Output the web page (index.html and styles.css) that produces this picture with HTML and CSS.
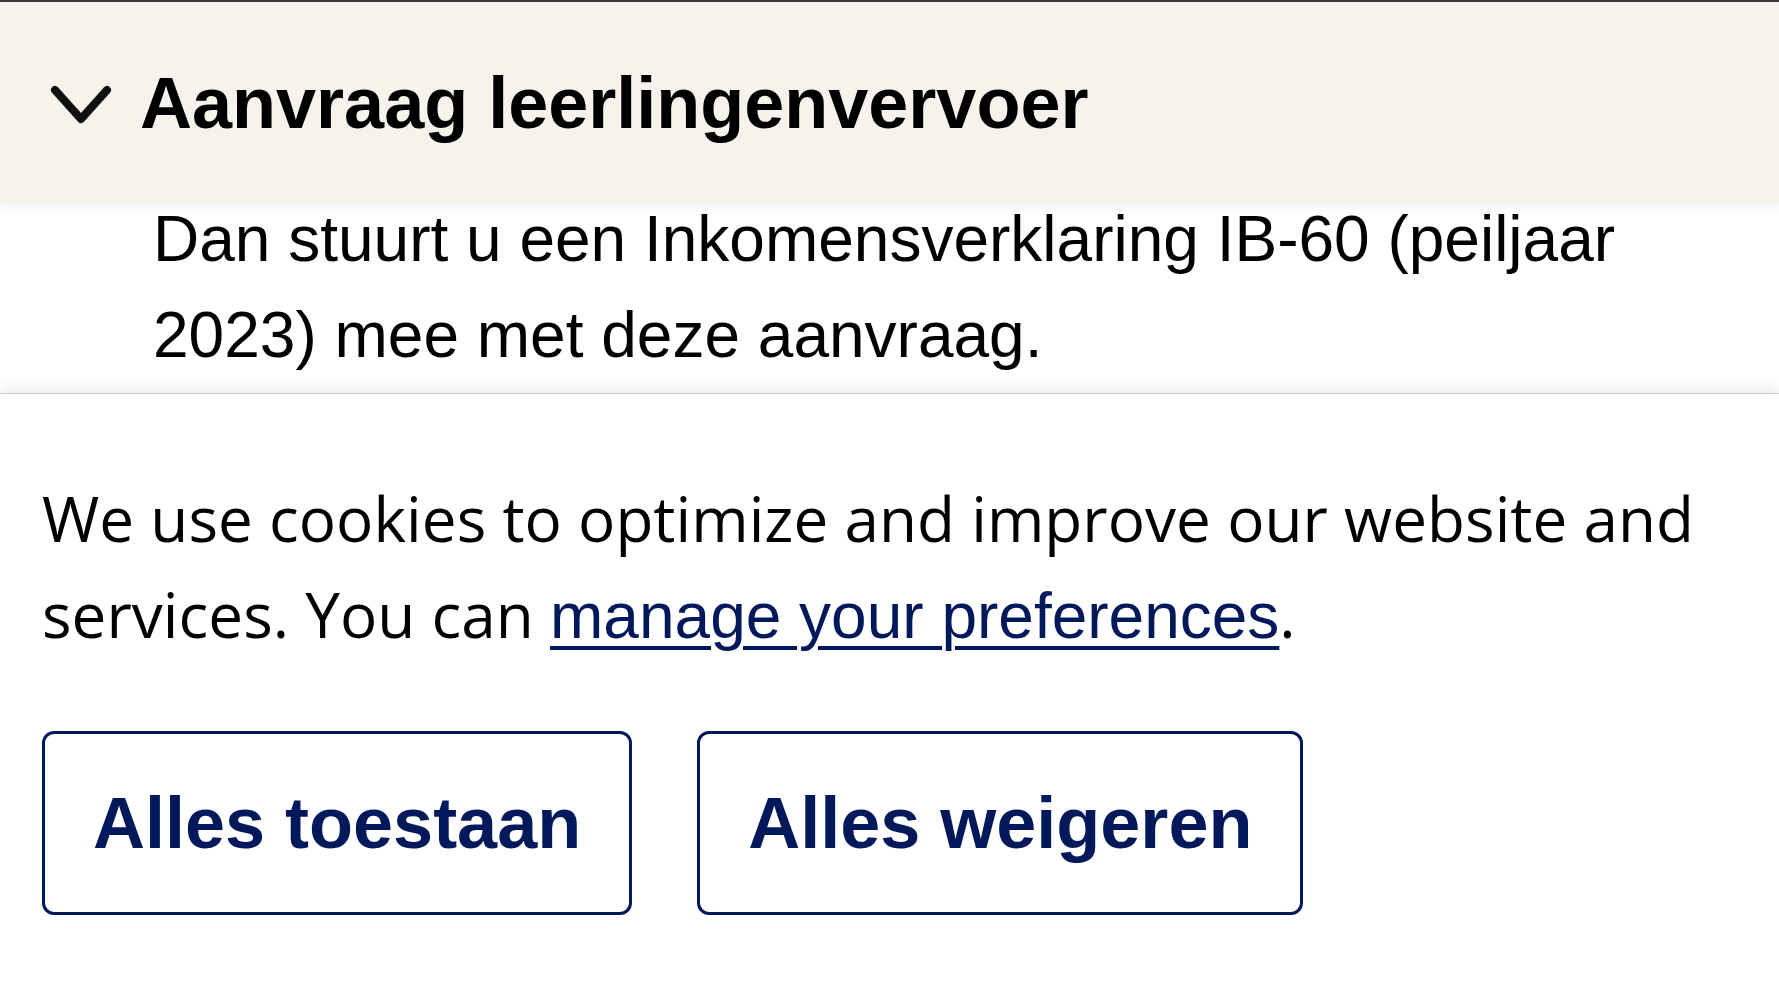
FILE: index.html
```html
<!DOCTYPE html>
<html lang="nl">
<head>
    <meta charset="UTF-8">
    <meta name="viewport" content="width=device-width, initial-scale=1.0">
    <title>Aanvraag leerlingenvervoer</title>
    <link rel="stylesheet" href="styles.css">
</head>
<body>
    <header class="step-header">
        <svg class="chevron" width="62" height="40" viewBox="0 0 62 40" aria-hidden="true">
            <polyline points="5,5 31,34 57,5" fill="none" stroke="#111" stroke-width="8" stroke-linecap="round" stroke-linejoin="round"/>
        </svg>
        <h1>Aanvraag leerlingenvervoer</h1>
    </header>

    <div class="step-content">
        <p>Dan stuurt u een Inkomensverklaring IB-60 (peiljaar 2023) mee met deze aanvraag.</p>
    </div>

    <div class="cookie-banner">
        <p class="cookie-text">We use cookies to optimize and improve our website and services. You can <a href="#">manage your preferences</a>.</p>
        <div class="cookie-actions">
            <button class="cookie-btn">Alles toestaan</button>
            <button class="cookie-btn">Alles weigeren</button>
        </div>
    </div>
</body>
</html>
```

FILE: styles.css
```css
body {
    margin: 0;
    padding: 0;
    background-color: #ffffff;
    font-family: "Liberation Sans", Arial, sans-serif;
    color: #000;
    overflow: hidden;
}

.step-header {
    position: relative;
    z-index: 1;
    display: flex;
    align-items: center;
    gap: 28px;
    height: 202px;
    padding-left: 50px;
    background-color: #f6f3ec;
    border-top: 2px solid #3a3936;
    box-shadow: 0 3px 8px rgba(0, 0, 0, 0.06);
}

.chevron {
    flex: none;
    margin-top: 4px;
}

.step-header h1 {
    margin: 0;
    font-size: 72px;
    font-weight: bold;
    line-height: 1;
}

.step-content {
    padding: 0 40px 0 153px;
}

.step-content p {
    margin: -13px 0 0;
    font-size: 64px;
    line-height: 96px;
}

.cookie-banner {
    position: relative;
    margin-top: 10px;
    padding: 76px 42px 0;
    border-top: 1px solid #cdcdcd;
    box-shadow: 0 -6px 12px rgba(0, 0, 0, 0.07);
    background-color: #fff;
}

.cookie-text {
    margin: 0;
    font-family: "Open Sans", sans-serif;
    font-size: 62px;
    letter-spacing: 0.05px;
    line-height: 96px;
}

.cookie-text a {
    font-family: "Liberation Sans", Arial, sans-serif;
    font-size: 64px;
    letter-spacing: normal;
    color: #01195b;
    text-decoration-thickness: 4px;
    text-underline-offset: 8px;
}

.cookie-actions {
    display: flex;
    gap: 65px;
    margin-top: 67px;
}

.cookie-btn {
    padding: 47px 48px;
    font-family: "Liberation Sans", Arial, sans-serif;
    font-size: 72px;
    font-weight: bold;
    line-height: 84px;
    color: #01195b;
    background-color: #fff;
    border: 3px solid #01195b;
    border-radius: 12px;
    cursor: pointer;
}
```
